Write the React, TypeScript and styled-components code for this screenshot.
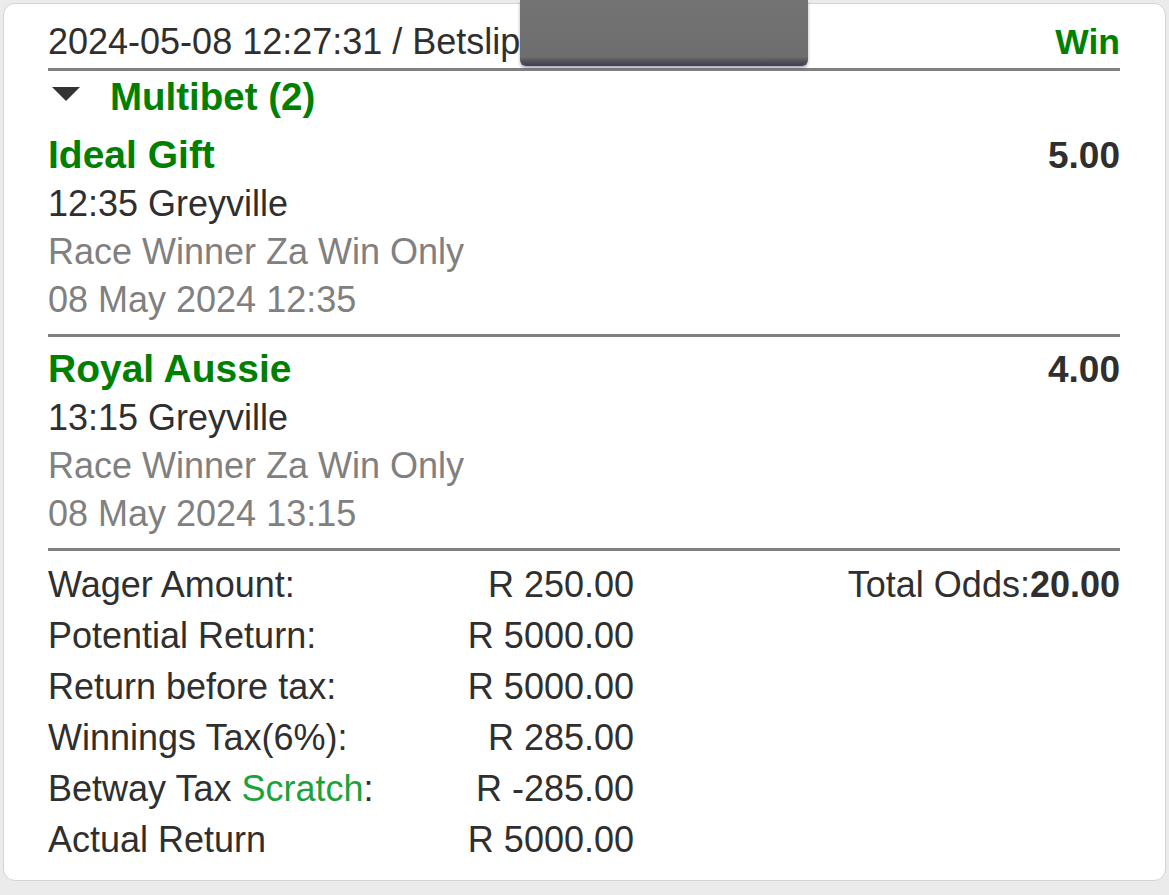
import React from 'react';
import styled, { createGlobalStyle } from 'styled-components';

interface Leg {
  name: string;
  odds: string;
  event: string;
  market: string;
  date: string;
}

interface SummaryLine {
  label: React.ReactNode;
  value: string;
}

const legs: Leg[] = [
  {
    name: 'Ideal Gift',
    odds: '5.00',
    event: '12:35 Greyville',
    market: 'Race Winner Za Win Only',
    date: '08 May 2024 12:35',
  },
  {
    name: 'Royal Aussie',
    odds: '4.00',
    event: '13:15 Greyville',
    market: 'Race Winner Za Win Only',
    date: '08 May 2024 13:15',
  },
];

const GlobalStyle = createGlobalStyle`
  html, body {
    margin: 0;
    padding: 0;
    background: #ebebeb;
  }
  body {
    font-family: "Liberation Sans", Arial, Helvetica, sans-serif;
    color: #2f2f2f;
  }
`;

const Page = styled('div')`
  padding: 3px;
  min-height: 889px;
`;

const Card = styled('div')`
  position: relative;
  width: 1163px;
  box-sizing: border-box;
  background: #ffffff;
  border: 1px solid #d4d4d4;
  border-radius: 12px;
  padding: 14px 45px 15px 44px;
`;

// covered-up part of the betslip id
const Redacted = styled('div')`
  position: absolute;
  left: 516px;
  top: -4px;
  width: 288px;
  height: 66px;
  border-radius: 0 0 6px 6px;
  background: linear-gradient(#737373 0%, #6e6e6e 86%, #4e4e56 94%, #3f4150 100%);
  box-shadow: 0 2px 3px rgba(60, 60, 90, 0.45);
`;

const Header = styled('div')`
  display: flex;
  justify-content: space-between;
  align-items: center;
  height: 48px;
  padding-bottom: 2px;
  border-bottom: 3px solid #808080;
  font-size: 36px;
`;

const Status = styled('span')`
  font-weight: bold;
  font-size: 35.5px;
  color: #008000;
`;

const MultibetRow = styled('div')`
  display: flex;
  align-items: center;
  gap: 30px;
  height: 48px;
  margin: 2px 0;
  padding-left: 4px;

  svg {
    margin-bottom: 6px;
  }
`;

const MultibetTitle = styled('span')`
  font-weight: bold;
  font-size: 38.5px;
  color: #008000;
`;

const LegBlock = styled('div')`
  padding: 8px 0 10px;
  border-bottom: 3px solid #808080;
`;

const LegTop = styled('div')`
  display: flex;
  justify-content: space-between;
  align-items: baseline;
  line-height: 48px;
`;

const LegName = styled('span')`
  font-weight: bold;
  font-size: 39px;
  color: #008000;
`;

const LegOdds = styled('span')`
  font-weight: bold;
  font-size: 37px;
  color: #2f2f2f;
`;

const LegLine = styled('div')<{ $muted?: boolean }>`
  font-size: 36px;
  line-height: 48px;
  color: ${(p) => (p.$muted ? '#808080' : '#2f2f2f')};
`;

const Summary = styled('div')`
  display: flex;
  padding-top: 8px;
  font-size: 36px;
`;

const SummaryTable = styled('div')`
  width: 586px;
`;

const SummaryRow = styled('div')`
  display: flex;
  justify-content: space-between;
  align-items: center;
  height: 51px;
`;

const TotalOdds = styled('div')`
  margin-left: auto;
  line-height: 51px;
  height: 51px;

  b {
    font-weight: bold;
  }
`;

const Scratch = styled('span')`
  color: #1aa33a;
`;

const Caret = () => (
  <svg width="28" height="14" viewBox="0 0 28 14">
    <polygon points="0,0 28,0 14,14" fill="#333333" />
  </svg>
);

const summary: SummaryLine[] = [
  { label: 'Wager Amount:', value: 'R 250.00' },
  { label: 'Potential Return:', value: 'R 5000.00' },
  { label: 'Return before tax:', value: 'R 5000.00' },
  { label: 'Winnings Tax(6%):', value: 'R 285.00' },
  {
    label: (
      <>
        Betway Tax <Scratch>Scratch</Scratch>:
      </>
    ),
    value: 'R -285.00',
  },
  { label: 'Actual Return', value: 'R 5000.00' },
];

const App: React.FC = () => {
  return (
    <Page>
      <GlobalStyle />
      <Card>
        <Header>
          <span>2024-05-08 12:27:31 / Betslip</span>
          <Status>Win</Status>
        </Header>
        <Redacted />

        <MultibetRow>
          <Caret />
          <MultibetTitle>Multibet (2)</MultibetTitle>
        </MultibetRow>

        {legs.map((leg) => (
          <LegBlock key={leg.name}>
            <LegTop>
              <LegName>{leg.name}</LegName>
              <LegOdds>{leg.odds}</LegOdds>
            </LegTop>
            <LegLine>{leg.event}</LegLine>
            <LegLine $muted>{leg.market}</LegLine>
            <LegLine $muted>{leg.date}</LegLine>
          </LegBlock>
        ))}

        <Summary>
          <SummaryTable>
            {summary.map((row, i) => (
              <SummaryRow key={i}>
                <span>{row.label}</span>
                <span>{row.value}</span>
              </SummaryRow>
            ))}
          </SummaryTable>
          <TotalOdds>
            Total Odds:<b>20.00</b>
          </TotalOdds>
        </Summary>
      </Card>
    </Page>
  );
};

export default App;
